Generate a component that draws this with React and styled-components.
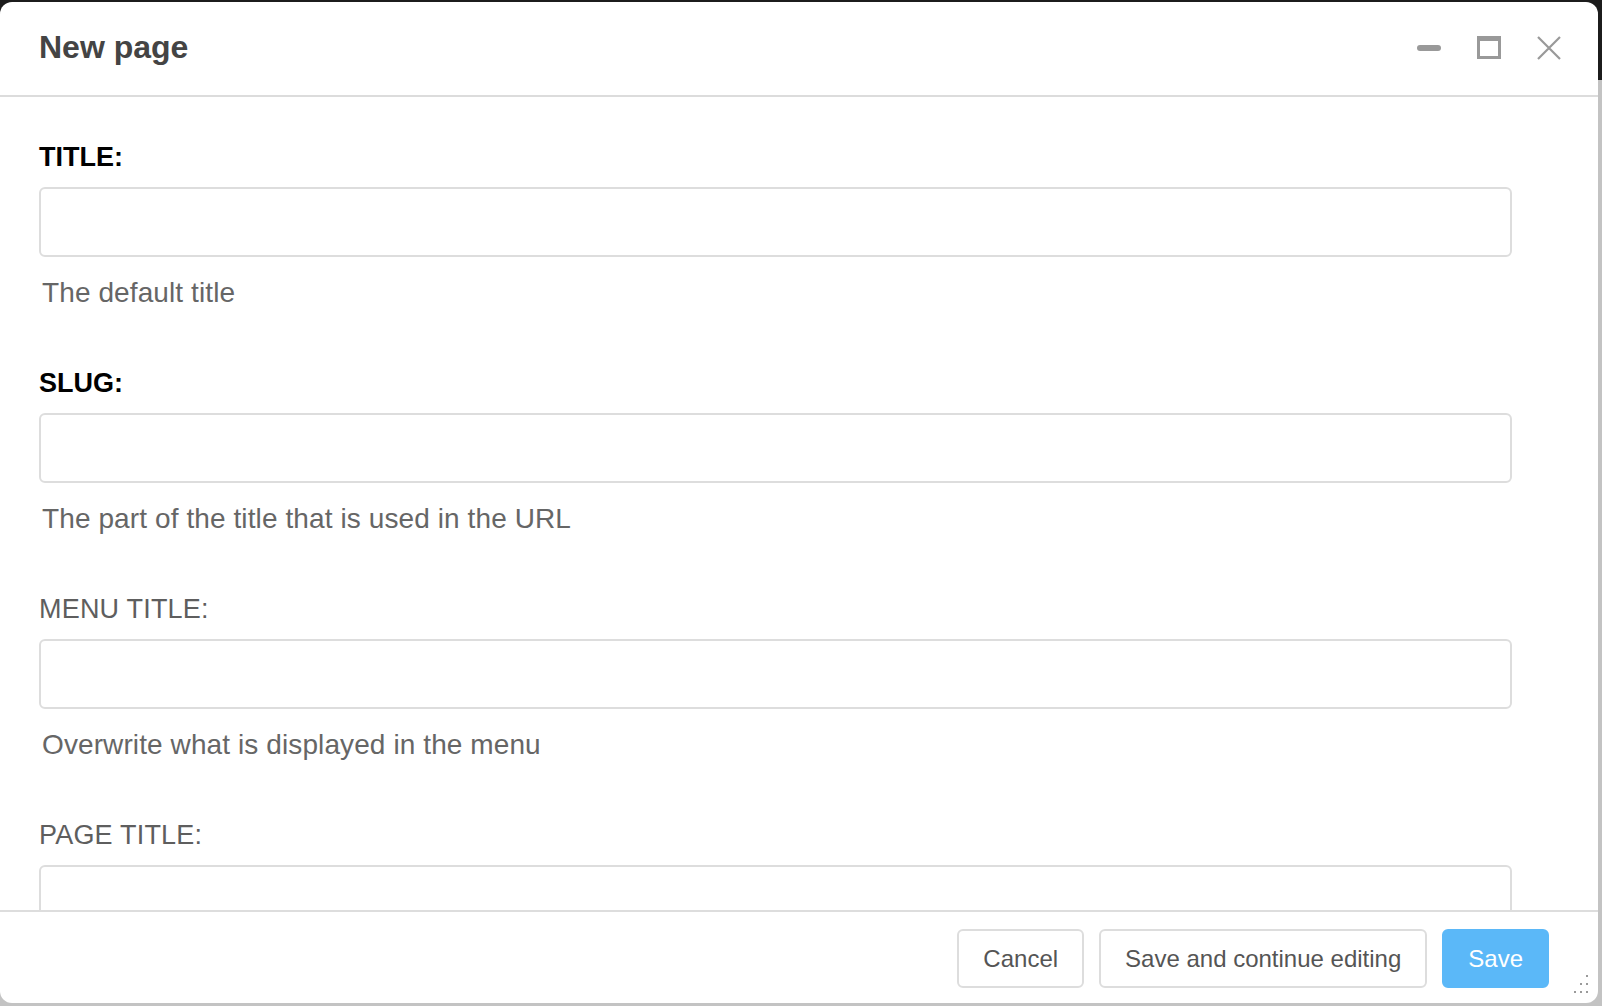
import React from "react";
import styled, { createGlobalStyle } from "styled-components";

const GlobalStyle = createGlobalStyle`
  html, body { margin: 0; padding: 0; }
  body {
    font-family: "Liberation Sans", Arial, Helvetica, sans-serif;
    background: #c3c3c3;
  }
  * { box-sizing: border-box; }
`;

const Backdrop = styled.div`
  width: 1602px;
  height: 1006px;
  background: linear-gradient(to bottom, #1c1c1c 0, #1c1c1c 80px, #c3c3c3 80px);
  padding: 2px 4px 3px 0;
  overflow: hidden;
`;

const Window = styled.div`
  position: relative;
  width: 1598px;
  height: 1001px;
  background: #fff;
  border-radius: 12px;
  display: flex;
  flex-direction: column;
  overflow: hidden;
`;

const Header = styled.header`
  height: 95px;
  flex: none;
  display: flex;
  align-items: center;
  justify-content: space-between;
  padding: 0 37px 2px 39px;
  border-bottom: 2px solid #dcdcdc;
`;

const Title = styled.h1`
  margin: 0;
  font-size: 32px;
  font-weight: 700;
  color: #444;
  line-height: normal;
`;

const Controls = styled.div`
  display: flex;
  align-items: center;
  gap: 36px;
`;

const ControlButton = styled.button`
  width: 24px;
  height: 24px;
  padding: 0;
  border: 0;
  background: none;
  display: flex;
  align-items: center;
  justify-content: center;
  cursor: pointer;
  svg { display: block; }
`;

const Body = styled.main`
  flex: 1;
  overflow: hidden;
  padding: 44px 86px 0 39px;
`;

const Field = styled.div`
  display: flex;
  flex-direction: column;
  margin-bottom: 58px;
`;

const Label = styled.label`
  font-size: 27px;
  line-height: 32px;
  font-weight: ${(p) => (p.$required ? 700 : 400)};
  color: ${(p) => (p.$required ? "#000" : "#5e5e5e")};
  letter-spacing: ${(p) => (p.$required ? "0" : "0.2px")};
`;

const Input = styled.input`
  margin-top: 14px;
  height: 70px;
  width: 100%;
  border: 2px solid #dddddd;
  border-radius: 6px;
  background: #fff;
  font-family: inherit;
  font-size: 27px;
  padding: 0 14px;
  outline: none;
`;

const Help = styled.div`
  margin-top: 20px;
  padding-left: 3px;
  font-size: 28px;
  line-height: 32px;
  letter-spacing: 0.1px;
  color: #666;
`;

const Footer = styled.footer`
  flex: none;
  display: flex;
  justify-content: flex-end;
  gap: 15px;
  padding: 17px 49px 15px 0;
  border-top: 2px solid #dddddd;
`;

const Button = styled.button`
  height: 59px;
  padding: 0 24px;
  font-family: inherit;
  font-size: 24px;
  border-radius: 6px;
  cursor: pointer;
  border: 2px solid ${(p) => (p.$primary ? "#5bb8f8" : "#dddddd")};
  background: ${(p) => (p.$primary ? "#5bb8f8" : "#fff")};
  color: ${(p) => (p.$primary ? "#fff" : "#555")};
  font-weight: ${(p) => (p.$primary ? 500 : 400)};
`;

const Grip = styled.div`
  position: absolute;
  right: 9px;
  bottom: 9px;
  width: 20px;
  height: 20px;
`;

const fields = [
  { label: "TITLE:", required: true, help: "The default title" },
  { label: "SLUG:", required: true, help: "The part of the title that is used in the URL" },
  { label: "MENU TITLE:", required: false, help: "Overwrite what is displayed in the menu" },
  { label: "PAGE TITLE:", required: false, help: null },
];

export default function App() {
  return (
    <>
      <GlobalStyle />
      <Backdrop>
        <Window>
          <Header>
            <Title>New page</Title>
            <Controls>
              <ControlButton aria-label="Minimize">
                <svg width="24" height="24" viewBox="0 0 24 24">
                  <rect x="0" y="9" width="24" height="6" rx="3" fill="#999" />
                </svg>
              </ControlButton>
              <ControlButton aria-label="Maximize">
                <svg width="24" height="24" viewBox="0 0 24 24">
                  <rect x="0" y="0" width="24" height="23" fill="#999" />
                  <rect x="3" y="5" width="18" height="15" fill="#fff" />
                </svg>
              </ControlButton>
              <ControlButton aria-label="Close">
                <svg width="24" height="24" viewBox="0 0 24 24">
                  <path d="M1 1 L23 23 M23 1 L1 23" stroke="#999" strokeWidth="2.2" fill="none" />
                </svg>
              </ControlButton>
            </Controls>
          </Header>
          <Body>
            {fields.map((f) => (
              <Field key={f.label}>
                <Label $required={f.required}>{f.label}</Label>
                <Input type="text" />
                {f.help && <Help>{f.help}</Help>}
              </Field>
            ))}
          </Body>
          <Footer>
            <Button>Cancel</Button>
            <Button>Save and continue editing</Button>
            <Button $primary>Save</Button>
          </Footer>
          <Grip>
            <svg width="20" height="20" viewBox="0 0 20 20">
              <g fill="#9a9a9a">
                <rect x="17" y="1" width="2" height="2" />
                <rect x="11" y="9" width="2" height="2" />
                <rect x="17" y="9" width="2" height="2" />
                <rect x="5" y="17" width="2" height="2" />
                <rect x="11" y="17" width="2" height="2" />
                <rect x="17" y="17" width="2" height="2" />
              </g>
            </svg>
          </Grip>
        </Window>
      </Backdrop>
    </>
  );
}
